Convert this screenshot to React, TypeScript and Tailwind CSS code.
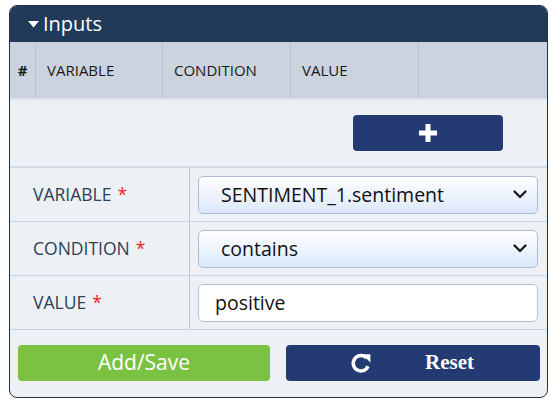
import React from "react";

function Chevron() {
  return (
    <svg width="14" height="9" viewBox="0 0 14 9" className="shrink-0">
      <path d="M1.5 1.5 L7 7 L12.5 1.5" fill="none" stroke="#111" strokeWidth="2.2" strokeLinecap="round" strokeLinejoin="round" />
    </svg>
  );
}

function Redo() {
  return (
    <svg width="22" height="22" viewBox="0 0 20 20">
      <path d="M15.2 5.6 A7 7 0 1 0 16.4 13" fill="none" stroke="#fff" strokeWidth="3.2" />
      <path d="M11 2 L18.5 2 L18.5 9.5 Z" fill="#fff" />
    </svg>
  );
}

function Row({ label, children }: { label: string; children: React.ReactNode }) {
  return (
    <div className="flex h-[54px] border-b border-[#c9d4e3]">
      <div className="w-[180px] shrink-0 flex items-center pl-[23px] border-r border-[#b9c8dc] text-[17.5px] text-[#2d4054]">
        {label} <span className="text-[#f01f1f] ml-[6px]">*</span>
      </div>
      <div className="flex-1 flex items-center pl-[8px] pr-[8px]">{children}</div>
    </div>
  );
}

export default function App() {
  return (
    <div className="w-[555px] h-[402px] bg-white pt-[5px] pl-[9px]" style={{ fontFamily: '"Open Sans", sans-serif' }}>
      <div className="w-[539px] h-[393px] border border-[#1e3350] rounded-[8px] overflow-hidden bg-[#edf0f5] flex flex-col">
        <div className="h-[36px] bg-[#213a5a] flex items-center pl-[18px] text-white text-[20px]">
          <svg width="11" height="7" viewBox="0 0 11 7" className="mr-[4px]">
            <path d="M0 0 L11 0 L5.5 6.5 Z" fill="#fff" />
          </svg>
          Inputs
        </div>
        <div className="h-[58px] bg-[#cbd3de] flex text-[15px] text-[#1a1a1a] font-medium border-b-[2px] border-[#dde3eb]">
          <div className="w-[26px] flex items-center justify-center font-bold border-r border-[#b8c3cf]">#</div>
          <div className="w-[127px] flex items-center pl-[11px] border-r border-[#b8c3cf]">VARIABLE</div>
          <div className="w-[128px] flex items-center pl-[11px] border-r border-[#b8c3cf]">CONDITION</div>
          <div className="w-[128px] flex items-center pl-[11px] border-r border-[#b8c3cf]">VALUE</div>
          <div className="flex-1" />
        </div>
        <div className="h-[68px] flex items-center justify-end pr-[44px] border-b-[2px] border-[#d3dbe5]">
          <button className="w-[150px] h-[36px] bg-[#243a73] rounded-[4px] flex items-center justify-center">
            <svg width="18" height="18" viewBox="0 0 18 18">
              <rect x="6.5" y="0" width="5" height="18" fill="#fff" />
              <rect x="0" y="6.5" width="18" height="5" fill="#fff" />
            </svg>
          </button>
        </div>
        <Row label="VARIABLE">
          <div className="w-[340px] h-[38px] rounded-[5px] border border-[#a9bcd4] bg-gradient-to-b from-white to-[#dbe8fa] flex items-center justify-between pl-[22px] pr-[10px] text-[19.5px] text-[#111]">
            <span>SENTIMENT_1.sentiment</span>
            <Chevron />
          </div>
        </Row>
        <Row label="CONDITION">
          <div className="w-[340px] h-[38px] rounded-[5px] border border-[#a9bcd4] bg-gradient-to-b from-white to-[#dbe8fa] flex items-center justify-between pl-[22px] pr-[10px] text-[19.5px] text-[#111]">
            <span>contains</span>
            <Chevron />
          </div>
        </Row>
        <Row label="VALUE">
          <div className="w-[340px] h-[38px] rounded-[5px] border border-[#b5c3d4] bg-white flex items-center pl-[16px] text-[19.5px] text-[#111]">
            positive
          </div>
        </Row>
        <div className="flex-1 flex items-center pl-[8px] pr-[6px] gap-[16px] pb-[2px]">
          <button className="w-[252px] h-[36px] bg-[#7cc242] rounded-[4px] text-white text-[21px]">Add/Save</button>
          <button className="w-[254px] h-[36px] bg-[#243a73] rounded-[4px] text-white flex items-center pl-[64px]">
            <Redo />
            <span className="ml-[53px] text-[21px] font-bold" style={{ fontFamily: '"Liberation Serif", serif' }}>Reset</span>
          </button>
        </div>
      </div>
    </div>
  );
}
